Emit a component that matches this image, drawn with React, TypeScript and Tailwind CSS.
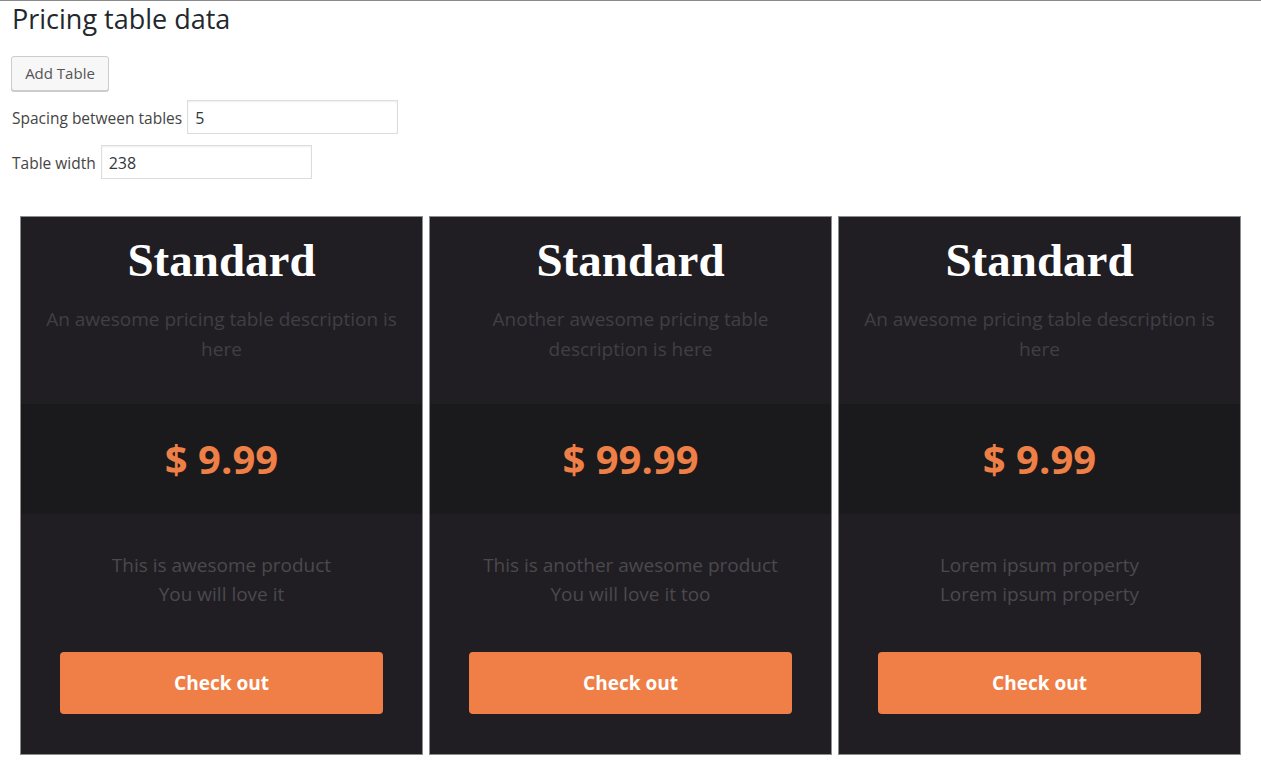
import React from "react";

type Plan = {
  title: string;
  description: string;
  price: string;
  features: string[];
};

const plans: Plan[] = [
  {
    title: "Standard",
    description: "An awesome pricing table description is here",
    price: "$ 9.99",
    features: ["This is awesome product", "You will love it"],
  },
  {
    title: "Standard",
    description: "Another awesome pricing table description is here",
    price: "$ 99.99",
    features: ["This is another awesome product", "You will love it too"],
  },
  {
    title: "Standard",
    description: "An awesome pricing table description is here",
    price: "$ 9.99",
    features: ["Lorem ipsum property", "Lorem ipsum property"],
  },
];

export default function App() {
  return (
    <div className="min-h-[777px] bg-white border-t border-[#8a8a8a] font-['Open_Sans',sans-serif] text-[#444]">
      <div className="px-[11px]">
        <h1 className="pt-[1px] text-[27px] leading-[34px] text-[#23282d] pl-[1px]">Pricing table data</h1>

        <button
          type="button"
          className="mt-[20px] h-[35px] w-[98px] rounded-[3px] border border-[#ccc] bg-[#f7f7f7] text-[15px] text-[#555] shadow-[0_1px_0_#ccc]"
        >
          Add Table
        </button>

        <Field label="Spacing between tables" value="5" className="mt-[9px]" />
        <Field label="Table width" value="238" className="mt-[11px]" />
      </div>

      <div className="mt-[37px] ml-[20px] flex gap-[6px]">
        {plans.map((p, i) => (
          <PricingCard key={i} plan={p} />
        ))}
      </div>
    </div>
  );
}

function Field({ label, value, className = "" }: { label: string; value: string; className?: string }) {
  return (
    <div className={`flex items-center gap-[5px] ${className}`}>
      <label className="pl-[1px] pt-[3px] text-[15.5px] text-[#444]">{label}</label>
      <input
        defaultValue={value}
        className="h-[34px] w-[211px] border border-[#ddd] bg-white px-[7px] pt-[2px] text-[16px] text-[#32373c] outline-none shadow-[inset_0_1px_2px_rgba(0,0,0,0.07)]"
      />
    </div>
  );
}

function PricingCard({ plan }: { plan: Plan }) {
  return (
    <div className="w-[403px] h-[539px] flex flex-col border border-[#8c8c8c] bg-[#201e22]">
      <div className="h-[187px] px-[24px] text-center">
        <h2 className="mt-[16px] font-['Liberation_Serif',serif] text-[47px] font-bold leading-[54px] text-white">
          {plan.title}
        </h2>
        <p className="mt-[17px] text-[19px] leading-[30px] text-[#413f45]">{plan.description}</p>
      </div>

      <div className="h-[110px] flex items-center justify-center bg-[#1a191c]">
        <span className="text-[40px] font-bold text-[#ee7f46]">{plan.price}</span>
      </div>

      <div className="flex-1 flex flex-col items-center">
        <div className="mt-[37px] text-center text-[19px] leading-[29px] text-[#4b494e]">
          {plan.features.map((f, i) => (
            <p key={i}>{f}</p>
          ))}
        </div>
        <button
          type="button"
          className="mt-[43px] h-[62px] w-[323px] rounded-[4px] bg-[#ef7f47] text-[19px] font-bold text-white"
        >
          Check out
        </button>
      </div>
    </div>
  );
}
